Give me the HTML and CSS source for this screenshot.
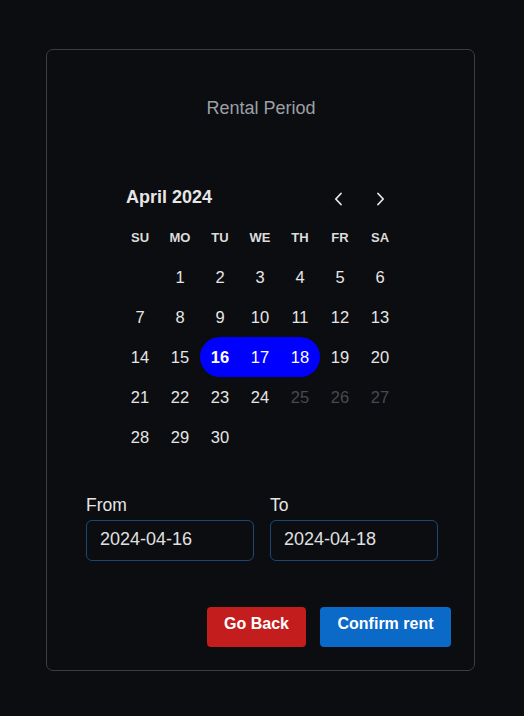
FILE: index.html
```html
<!DOCTYPE html>
<html>
<head>
<meta charset="utf-8">
<link rel="stylesheet" href="styles.css">
</head>
<body>
<div class="card">
  <div class="title">Rental Period</div>
  <div class="calendar">
    <div class="cal-head">
      <span class="month">April 2024</span>
      <div class="nav">
        <button class="nav-btn"><svg width="16" height="16" viewBox="0 0 16 16"><path d="M10 2.5 L4.8 8 L10 13.5" fill="none" stroke="#e6e6e6" stroke-width="1.8" stroke-linecap="round" stroke-linejoin="round"/></svg></button>
        <button class="nav-btn"><svg width="16" height="16" viewBox="0 0 16 16"><path d="M6 2.5 L11.2 8 L6 13.5" fill="none" stroke="#e6e6e6" stroke-width="1.8" stroke-linecap="round" stroke-linejoin="round"/></svg></button>
      </div>
    </div>
    <div class="grid">
      <div class="wd">SU</div><div class="wd">MO</div><div class="wd">TU</div><div class="wd">WE</div><div class="wd">TH</div><div class="wd">FR</div><div class="wd">SA</div>
      <div class="d"></div><div class="d">1</div><div class="d">2</div><div class="d">3</div><div class="d">4</div><div class="d">5</div><div class="d">6</div>
      <div class="d">7</div><div class="d">8</div><div class="d">9</div><div class="d">10</div><div class="d">11</div><div class="d">12</div><div class="d">13</div>
      <div class="d">14</div><div class="d">15</div><div class="d sel start today">16</div><div class="d sel mid">17</div><div class="d sel end">18</div><div class="d">19</div><div class="d">20</div>
      <div class="d">21</div><div class="d">22</div><div class="d">23</div><div class="d">24</div><div class="d off">25</div><div class="d off">26</div><div class="d off">27</div>
      <div class="d">28</div><div class="d">29</div><div class="d">30</div><div class="d"></div><div class="d"></div><div class="d"></div><div class="d"></div>
    </div>
  </div>
  <div class="fields">
    <label class="field">
      <span class="label">From</span>
      <span class="input">2024-04-16</span>
    </label>
    <label class="field">
      <span class="label">To</span>
      <span class="input">2024-04-18</span>
    </label>
  </div>
  <div class="actions">
    <button class="btn back">Go Back</button>
    <button class="btn confirm">Confirm rent</button>
  </div>
</div>
</body>
</html>
```
FILE: styles.css
```css
* { box-sizing: border-box; }
html, body { margin: 0; padding: 0; }
body {
  background: #0c0d10;
  font-family: "Liberation Sans", Arial, sans-serif;
  color: #e6e6e6;
  width: 524px;
  height: 716px;
  overflow: hidden;
  padding-top: 49px;
  padding-left: 46px;
}
.card {
  width: 429px;
  height: 622px;
  border: 1px solid #3a3d43;
  border-radius: 7px;
  background: #0c0d10;
  padding-top: 48px;
  display: flex;
  flex-direction: column;
}
.title {
  text-align: center;
  font-size: 18px;
  line-height: 20px;
  color: #9ba0a6;
  padding-left: 1px;
}
.calendar {
  width: 280px;
  margin: 59px 0 0 73px;
}
.cal-head {
  height: 40px;
  display: flex;
  align-items: center;
  justify-content: space-between;
}
.month {
  padding-left: 6px;
  padding-top: 1px;
  font-weight: bold;
  font-size: 18px;
  color: #e6e6e6;
}
.nav { display: flex; padding-top: 3px; padding-left: 1px; }
.nav-btn {
  width: 40px;
  height: 40px;
  background: none;
  border: none;
  padding: 0;
  display: flex;
  align-items: center;
  justify-content: center;
}
.nav-btn:last-child { margin-left: 1px; }
.grid {
  display: grid;
  grid-template-columns: repeat(7, 40px);
  grid-auto-rows: 40px;
}
.wd {
  display: flex;
  align-items: center;
  justify-content: center;
  font-weight: bold;
  font-size: 13px;
  color: #dcdcdc;
}
.d {
  display: flex;
  align-items: center;
  justify-content: center;
  font-size: 16.5px;
  color: #e6e6e6;
}
.d.off { color: #474a4f; }
.d.sel { background: #0000ff; color: #ffffff; }
.d.start { border-radius: 20px 0 0 20px; }
.d.end { border-radius: 0 20px 20px 0; }
.d.today { font-weight: bold; }
.fields {
  display: flex;
  gap: 16px;
  margin-top: 38px;
  padding-left: 39px;
}
.field {
  display: flex;
  flex-direction: column;
  gap: 5px;
}
.label {
  font-size: 17.5px;
  line-height: 20px;
  color: #e6e6e6;
}
.input {
  width: 168px;
  height: 41px;
  border: 1px solid #1d4775;
  border-radius: 6px;
  padding-left: 13px;
  padding-bottom: 2px;
  display: flex;
  align-items: center;
  font-size: 18px;
  color: #e0e0e0;
}
.actions {
  display: flex;
  justify-content: flex-end;
  gap: 14px;
  margin-top: 46px;
  padding-right: 23px;
}
.btn {
  height: 40px;
  border: none;
  border-radius: 4px;
  color: #ffffff;
  font-family: "Liberation Sans", Arial, sans-serif;
  font-weight: bold;
  font-size: 16px;
  padding: 0 10px 6px;
}
.back { background: #c41d1d; width: 99px; }
.confirm { background: #0b69c8; width: 131px; }
```
